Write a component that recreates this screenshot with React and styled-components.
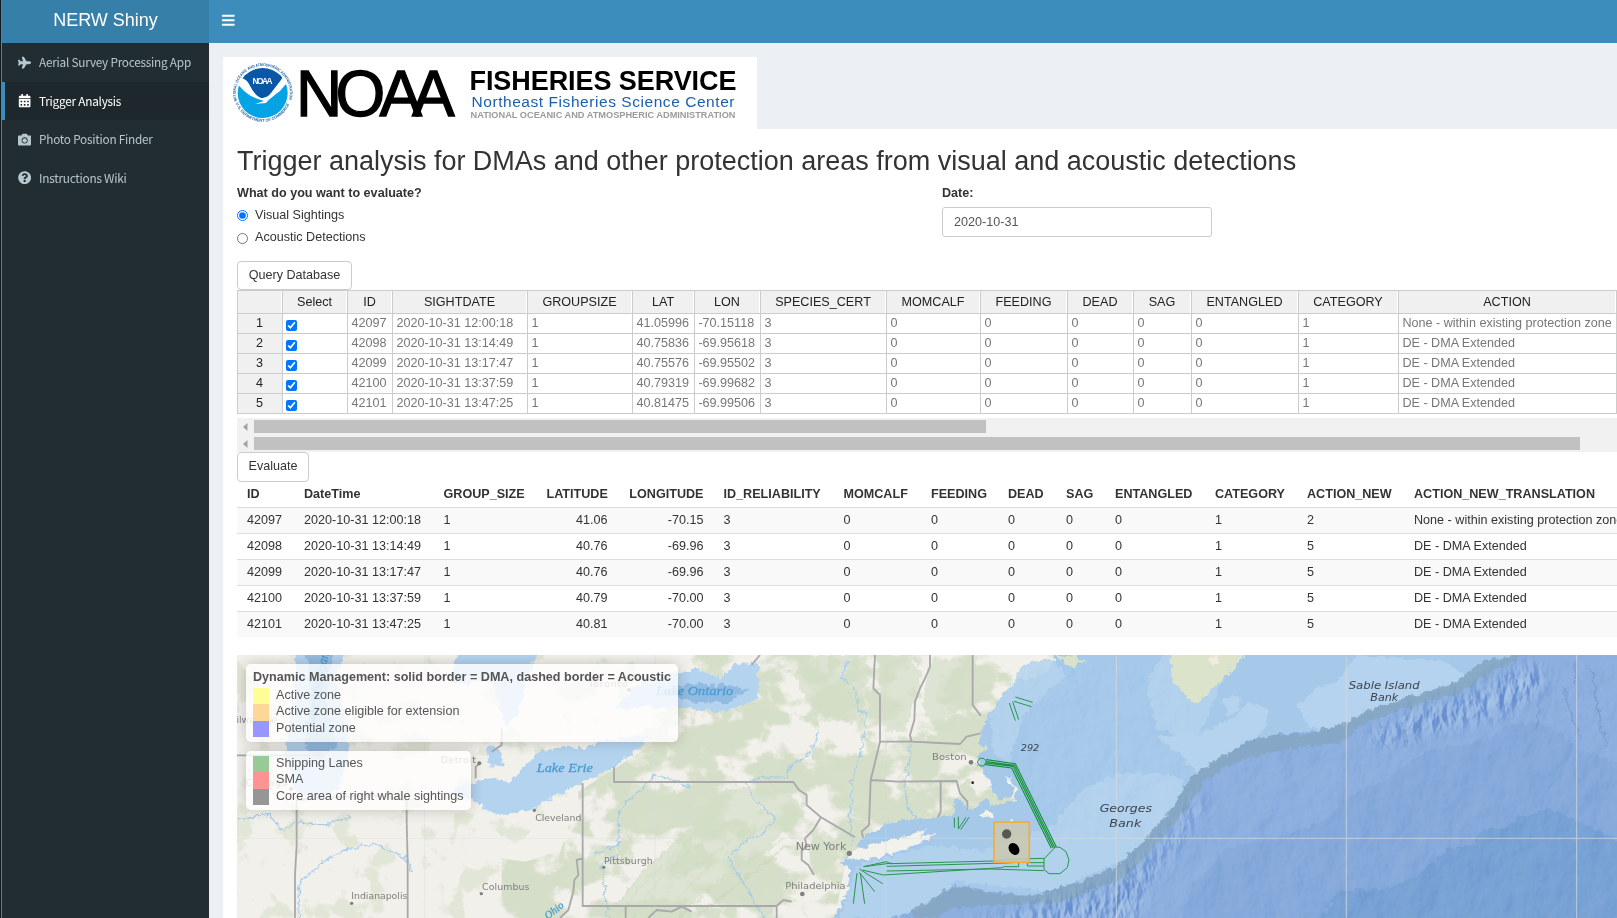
import React from "react";
import styled, { createGlobalStyle, css } from "styled-components";
import { FaPlane, FaCalendarAlt, FaCamera, FaQuestionCircle, FaBars } from "react-icons/fa";

const GlobalStyle = createGlobalStyle`
  * { box-sizing: border-box; }
  html, body { margin: 0; padding: 0; overflow: hidden; background: #fff; }
  body {
    font-family: "Liberation Sans", Arial, sans-serif;
    font-size: 12.6px;
    line-height: 18px;
    color: #333;
  }
`;

const Page = styled.div`
  display: flex;
  width: 1617px;
  height: 918px;
  overflow: hidden;
  background: #ecf0f5;
`;

const Sidebar = styled.aside`
  flex: 0 0 209px;
  background: #222d32;
  border-left: 1px solid #111b1e;
  box-shadow: inset 1px 0 0 #2b9a94;
  padding-left: 1px;
`;

const Brand = styled.div`
  height: 43px;
  padding-top: 7px;
  background: #367fa9;
  color: #fff;
  font-size: 18px;
  line-height: 26px;
  text-align: center;
`;

const NavItem = styled.a`
  display: flex;
  align-items: center;
  height: 38.6px;
  padding-left: 13px;
  border-left: 3px solid transparent;
  font-family: "Noto Sans CJK SC", "Open Sans", sans-serif;
  font-size: 11.8px;
  letter-spacing: -0.24px;
  white-space: nowrap;
  color: #b8c7ce;
  ${(p) =>
    p.$active &&
    css`
      color: #fff;
      background: #1e282c;
      border-left-color: #3c8dbc;
    `}
`;

const NavIcon = styled.span`
  display: flex;
  width: 21px;
  font-size: 13.3px;
`;

const Main = styled.main`
  flex: 1;
  min-width: 0;
`;

const TopBar = styled.header`
  display: flex;
  align-items: flex-start;
  height: 43px;
  padding: 13px 0 0 12px;
  background: #3c8dbc;
  color: #fff;
  font-size: 14.5px;
`;

const Content = styled.section`
  padding: 14px 0 0 14px;
`;

const LogoPanel = styled.div`
  width: 534px;
  height: 72px;
  background: #fff;
  svg { display: block; }
`;

const Panel = styled.div`
  height: 789px;
  padding-left: 14px;
  background: #fff;
  overflow: hidden;
`;

const Title = styled.h2`
  margin: 0;
  padding-top: 17px;
  height: 55px;
  font-size: 27px;
  line-height: 30px;
  font-weight: 400;
  letter-spacing: -0.01px;
  white-space: nowrap;
`;

const FormRow = styled.div`
  display: flex;
  height: 77px;
`;

const FormColumn = styled.div`
  width: ${(p) => p.$width}px;
`;

const FieldLabel = styled.div`
  font-weight: 700;
`;

const RadioOption = styled.label`
  display: flex;
  height: 22px;
  padding-top: 4px;
  gap: 7px;
  input {
    width: 11px;
    height: 11px;
    margin: ${(p) => p.$drop}px 0 0;
    accent-color: #0075ff;
  }
`;

const DateInput = styled.div`
  margin-top: 5px;
  width: 270px;
  height: 30px;
  padding: 5px 11px;
  border: 1px solid #ccc;
  border-radius: 3px;
  color: #555;
`;

const Button = styled.button`
  display: block;
  width: ${(p) => p.$width}px;
  height: ${(p) => p.$height}px;
  padding: 0 0 2px;
  border: 1px solid #ccc;
  border-radius: 4px;
  background: #fff;
  color: #333;
  font: inherit;
`;

const SightingGrid = styled.div`
  display: grid;
  grid-template-columns: 45px 65px 45px 135px 105px 62px 66px 126px 94px 87px 66px 58px 107px 100px 218px;
  grid-template-rows: 23px repeat(5, 20px);
  border: solid #ccc;
  border-width: 1px 0 0 1px;
`;

const HeadCell = styled.div`
  padding: 2px 1px 0 0;
  border: solid #ccc;
  border-width: 0 1px 1px 0;
  box-shadow: inset -1px 0 0 #fff;
  background: #f0f0f0;
  color: #222;
  text-align: center;
`;

const RowHead = styled(HeadCell)`
  padding-top: 0;
  box-shadow: none;
`;

const GridCell = styled.div`
  padding-left: 3.4px;
  border: solid #ccc;
  border-width: 0 1px 1px 0;
  color: #777;
  white-space: nowrap;
`;

const Check = styled.input`
  display: block;
  width: 11px;
  height: 11px;
  margin: 6px 0 0 0;
  accent-color: #0075ff;
`;

const ScrollTrack = styled.div`
  display: flex;
  height: 17px;
  margin-top: ${(p) => p.$gap || 0}px;
  padding: 2px 0;
  background: #f1f1f1;
`;

const ScrollArrow = styled.div`
  width: 17px;
  padding: 3px 0 0 6px;
  svg { display: block; }
`;

const ScrollThumb = styled.div`
  width: ${(p) => p.$width}px;
  height: 13px;
  background: #c1c1c1;
`;

const ResultTable = styled.div`
  height: 173px;
  padding-bottom: 18px;
`;

const ResultRow = styled.div`
  display: grid;
  grid-template-columns: 57px 139.5px 103px 81px 96px 120px 87.5px 77px 58px 49px 100px 92px 107px 260px;
  height: 26px;
  padding-top: 3px;
  border-top: 1px solid #ddd;
  background: ${(p) => (p.$striped ? "#f9f9f9" : "#fff")};
  ${(p) =>
    p.$head &&
    css`
      height: 25px;
      border-top: 0;
      font-weight: 700;
    `}
`;

const ResultCell = styled.div`
  padding: 0 10px;
  text-align: ${(p) => (p.$right ? "right" : "left")};
  white-space: nowrap;
`;

const MapFrame = styled.div`
  position: relative;
  height: 263px;
  overflow: hidden;
  > svg { display: block; }
`;

const Legends = styled.div`
  position: absolute;
  left: 9px;
  top: 9px;
  display: flex;
  flex-direction: column;
  align-items: flex-start;
  gap: 9px;
`;

const Legend = styled.div`
  width: ${(p) => p.$width}px;
  height: ${(p) => p.$height}px;
  padding: 5px 7px;
  border-radius: 5px;
  background: rgba(255, 255, 255, 0.8);
  box-shadow: 0 0 14px rgba(0, 0, 0, 0.2);
  color: #555;
  white-space: nowrap;
`;

const LegendTitle = styled.div`
  height: 19px;
  line-height: 16px;
  font-weight: 700;
`;

const LegendItem = styled.div`
  display: flex;
  gap: 7px;
  height: 16.3px;
  line-height: 15.4px;
`;

const Swatch = styled.span`
  width: 16px;
  background: ${(p) => p.$color};
`;

const navItems = [
  { icon: FaPlane, label: "Aerial Survey Processing App" },
  { icon: FaCalendarAlt, label: "Trigger Analysis", active: true },
  { icon: FaCamera, label: "Photo Position Finder" },
  { icon: FaQuestionCircle, label: "Instructions Wiki" },
];

const gridHeads = ["", "Select", "ID", "SIGHTDATE", "GROUPSIZE", "LAT", "LON", "SPECIES_CERT", "MOMCALF", "FEEDING", "DEAD", "SAG", "ENTANGLED", "CATEGORY", "ACTION"];
const resultHeads = ["ID", "DateTime", "GROUP_SIZE", "LATITUDE", "LONGITUDE", "ID_RELIABILITY", "MOMCALF", "FEEDING", "DEAD", "SAG", "ENTANGLED", "CATEGORY", "ACTION_NEW", "ACTION_NEW_TRANSLATION"];

const sightings = [
  ["42097", "2020-10-31 12:00:18", "41.05996", "-70.15118", "41.06", "-70.15", "2", "None - within existing protection zone"],
  ["42098", "2020-10-31 13:14:49", "40.75836", "-69.95618", "40.76", "-69.96", "5", "DE - DMA Extended"],
  ["42099", "2020-10-31 13:17:47", "40.75576", "-69.95502", "40.76", "-69.96", "5", "DE - DMA Extended"],
  ["42100", "2020-10-31 13:37:59", "40.79319", "-69.99682", "40.79", "-70.00", "5", "DE - DMA Extended"],
  ["42101", "2020-10-31 13:47:25", "40.81475", "-69.99506", "40.81", "-70.00", "5", "DE - DMA Extended"],
];

function NoaaLogo() {
  return (
    <svg width="534" height="72" viewBox="223 57 534 72">
      <defs>
        <clipPath id="seal"><circle cx="262.7" cy="93" r="25" /></clipPath>
        <path id="ringTop" d="M236.9 101 A27 27 0 1 1 288.5 101" />
        <path id="ringBottom" d="M234.9 100.5 A28.8 28.8 0 0 0 290.5 100.5" />
      </defs>
      <g clipPath="url(#seal)">
        <rect x="233" y="63" width="60" height="60" fill="#fff" />
        <path d="M243 65H283V77C280 82 276 86 272.500 91C269 96 266 98 261 98C256 96 252 90 249 84C247 80 244 79 240 77Z" fill="#0a57a7" />
        <path d="M237 83C243 91 249 96 258 99L264 101L255 104L266 103C270 98 275 95 280 91L290 79V124H236Z" fill="#04a3e6" />
      </g>
      <text x="262.600" y="84" textAnchor="middle" fontFamily="Liberation Sans" fontWeight="700" fontSize="8.300" fill="#fff" textLength="20">NOAA</text>
      <g fontFamily="Liberation Sans" fontWeight="700" fontSize="4" fill="#2467ae">
        <text><textPath href="#ringTop" textLength="99" lengthAdjust="spacingAndGlyphs">NATIONAL OCEANIC AND ATMOSPHERIC ADMINISTRATION</textPath></text>
        <text><textPath href="#ringBottom" startOffset="3" textLength="68" lengthAdjust="spacingAndGlyphs">U.S. DEPARTMENT OF COMMERCE</textPath></text>
      </g>
      <text x="296 335.500 379.500 412" y="115.500" fontFamily="Liberation Sans" fontSize="64" fill="#000" stroke="#000" strokeWidth="1.300">NOAA</text>
      <text x="469.500" y="90" fontFamily="Liberation Sans" fontWeight="700" fontSize="27" fill="#000" textLength="267">FISHERIES SERVICE</text>
      <text x="471.500" y="106.500" fontFamily="Liberation Sans" fontSize="15.500" fill="#1a5fae" textLength="263">Northeast Fisheries Science Center</text>
      <text x="470.500" y="118" fontFamily="Liberation Sans" fontWeight="700" fontSize="9" fill="#9b9b9b" textLength="265" lengthAdjust="spacingAndGlyphs">NATIONAL OCEANIC AND ATMOSPHERIC ADMINISTRATION</text>
    </svg>
  );
}

/* Drawn in thirds of a pixel: west, central and east sheets are shifted side by side. */
function CoastMap() {
  const sea = "#a6c9ea";
  const shallow = "#b5d3ee";
  return (
    <svg width="1380" height="263" viewBox="36 30 4140 789">
      <defs>
        <filter id="forest" x="0" y="0" width="100%" height="100%" colorInterpolationFilters="sRGB">
          <feTurbulence type="fractalNoise" baseFrequency=".006 .009" numOctaves="6" seed="8" />
          <feColorMatrix values="0 0 0 0 .835  0 0 0 0 .87  0 0 0 0 .785  9 0 0 0 -3.9" />
          <feComposite in2="SourceGraphic" operator="in" />
        </filter>
        <filter id="forestLight" x="0" y="0" width="100%" height="100%" colorInterpolationFilters="sRGB">
          <feTurbulence type="fractalNoise" baseFrequency=".012" numOctaves="6" seed="3" />
          <feColorMatrix values="0 0 0 0 .84  0 0 0 0 .875  0 0 0 0 .79  10 0 0 0 -5.7" />
          <feComposite in2="SourceGraphic" operator="in" />
        </filter>
        <filter id="rough" x="-5%" y="-5%" width="110%" height="110%" colorInterpolationFilters="sRGB">
          <feTurbulence type="fractalNoise" baseFrequency=".05" numOctaves="3" seed="5" />
          <feDisplacementMap in="SourceGraphic" scale="26" xChannelSelector="R" yChannelSelector="G" />
        </filter>
        <filter id="relief" x="0" y="0" width="100%" height="100%" colorInterpolationFilters="sRGB">
          <feTurbulence type="fractalNoise" baseFrequency=".012 .009" numOctaves="4" seed="12" />
          <feColorMatrix values="0 0 0 0 0  0 0 0 0 0  0 0 0 0 0  1 0 0 0 0" result="h" />
          <feDiffuseLighting in="h" surfaceScale="12" lightingColor="#fff" result="l"><feDistantLight azimuth="215" elevation="32" /></feDiffuseLighting>
          <feComposite in="l" in2="SourceGraphic" operator="in" />
        </filter>
        <filter id="canyons" x="-5%" y="-5%" width="110%" height="110%" colorInterpolationFilters="sRGB">
          <feTurbulence type="fractalNoise" baseFrequency=".035 .016" numOctaves="3" seed="7" />
          <feColorMatrix values="0 0 0 0 0  0 0 0 0 0  0 0 0 0 0  1 0 0 0 0" result="h" />
          <feDiffuseLighting in="h" surfaceScale="18" lightingColor="#fff" result="l"><feDistantLight azimuth="200" elevation="32" /></feDiffuseLighting>
          <feGaussianBlur in="SourceAlpha" stdDeviation="22" result="soft" />
          <feComposite in="l" in2="soft" operator="in" />
        </filter>
      </defs>

      <rect x="36" y="30" width="4140" height="789" fill="#f2f0eb" />
      <g filter="url(#forestLight)"><path d="M36 30H1395V500L1070 420L830 640V819H36Z" opacity=".6" /></g>
      <g filter="url(#forest)">
        <path d="M1395 30H2490V400L2200 560L1860 660L1830 819H830V640L900 650L1060 600L1060 440L1280 300Z" />
      </g>
      <g filter="url(#forestLight)"><path d="M1395 30H2490V400L2200 560L1860 660L1830 819H1000V640L1060 440L1280 330Z" /></g>
      <g stroke="#c4d4b2" strokeWidth="6" opacity=".42" fill="none" filter="url(#rough)">
        <path d="M1180 819L1240 730L1400 580M1220 819L1320 680L1500 540M1265 819L1360 700L1560 560M1300 819L1450 670L1620 540M1360 819L1500 690L1680 580M1160 800L1270 660L1330 620M1420 810L1560 700L1690 600" />
      </g>
      <g fill="#d3dec7" opacity=".65" filter="url(#rough)">
        <path d="M1740 30H1930V140L1880 240L1800 220L1740 160L1710 90ZM1960 60L2060 40L2090 90L2040 260H1980ZM2120 40H2230L2200 190L2130 250L2090 180ZM1150 810L1280 650L1400 540L1500 430L1680 430L1740 500L1620 620L1440 740L1350 819Z" />
      </g>

      <g filter="url(#rough)">
        <path d="M215 10H360L330 100L370 260L373 340L340 430L280 465L210 440L180 320L200 220Z" fill="#b4d3ef" />
        <path d="M240 10H330L300 150L335 300L280 340L240 310L260 180Z" fill="#96bce2" />
        <path d="M700 10H940L900 120L880 210L840 245L800 100L710 120L680 110Z" fill="#b4d3ef" />
        <path d="M785 310L800 300L830 315L840 360L800 365Z" fill="#b4d3ef" />
        <path d="M735 415L800 400L850 410L880 385L940 325L1000 305L1080 310L1130 285L1270 270L1265 290L1180 355L1070 415L980 460L930 490L830 512L780 495L740 460L680 450L700 425Z" fill="#b4d3ef" />
        <path d="M1165 195L1230 125L1330 85L1420 75L1480 100L1530 60L1600 55V160L1570 175L1480 203L1400 190L1260 185Z" fill="#b4d3ef" />
        <path d="M1300 140L1400 115L1500 120L1570 135L1500 175L1410 170Z" fill="#91bbe1" />
      </g>

      <g fill="none" stroke="#a7cdec" strokeWidth="4" filter="url(#rough)">
        <path d="M36 525L130 510L180 560L210 530L300 540L375 520L360 505M220 819L225 710L310 640L370 610L450 597L545 640L560 680M1185 620L1130 660L1148 819M1100 630L1180 600L1180 500L1240 440L1290 390L1330 400L1400 430M1565 410L1630 395L1680 400L1700 360L1750 330L1780 260M1565 410L1580 450L1650 520L1620 560L1560 590L1510 640L1570 740L1620 819M1865 50L1850 100L1890 130L1900 200L1925 200L1910 320L1885 380L1875 520L1880 600M2060 290L2040 420L2045 480L2080 530" />
      </g>

      <g fill="none" stroke="#a9a9ab" strokeWidth="5.500" strokeLinejoin="round">
        <path d="M36 331H300M215 465V600L210 690V819M215 465L440 450L545 465M545 465V530L548 650V819M765 355L752 365V400M830 250V300L800 320M1073 415V783H1655M1167 365V411H1705L1722 435L1745 450V480L1788 517L1890 577M1788 517L1765 555L1740 580L1745 605L1730 618V645L1750 660L1767 690M1073 640L1055 645L1060 690L1048 705L1045 740L1030 795L1005 819M1202 783V819M1655 783V819M1655 783L1675 765L1700 770M1270 819L1295 795L1340 800L1370 785L1400 800M1605 30L1580 60M1950 30L1945 130L1965 150V290L1937 405L1932 540L1910 560L1915 580M2115 30V65L2105 90L2085 130L2070 170L2068 225L2055 270L2060 290M1965 290L2060 290L2205 297L2225 275L2267 265M2243 30V180L2267 212M1937 405L2020 410L2195 408L2205 445L2227 470V498M2147 410V500L2135 525" />
      </g>

      <g transform="translate(1395 0)">
        <path filter="url(#rough)" d="M1110 0L1080 70L1040 95L985 105L950 130L930 165L905 195L890 225L875 260L870 295L890 310L860 335L868 350L855 362L875 370L890 400L908 425L907 450L935 462L967 456L968 425L945 400L965 400L980 450L970 468L900 482L885 455L870 480L845 490L830 500L815 465L800 460L790 505L740 520L640 525L590 535L550 560L515 585L498 615L450 655L485 675L470 740L450 785L410 840H2850V0Z" fill={sea} />
        <path d="M1000 60L1080 40L1130 90L1060 150L1000 210L960 350L910 330L900 210ZM1410 30L1370 120L1400 250L1520 290L1600 100L1640 0ZM1090 540L1180 430L1290 385L1410 385L1475 400L1480 490L1400 600L1200 690L1080 740L800 710L650 819H450L500 660L730 600L880 620Z" fill={shallow} opacity=".85" filter="url(#rough)" />
        <path filter="url(#rough)" d="M497 612L540 597L620 585L680 563L712 552L690 574L740 568L700 590L640 615L570 635L500 647L475 640ZM870 515L890 495L912 515ZM945 535L970 525L975 535Z" fill="#f2f1eb" />
        <path filter="url(#rough)" d="M1100 30L1160 35L1190 50L1140 65Z" fill="#d8e2ca" />
        <path d="M980 60H1500V560L1100 600L1010 480L900 300Z" fill="#000" filter="url(#relief)" opacity=".14" style={{ mixBlendMode: "soft-light" }} />
      </g>

      <g transform="translate(2775 0)">
        <g filter="url(#rough)">
          <path d="M60 0L65 110L90 130L125 175L150 165L200 120L240 80L290 25V0Z" fill="#dbe3ca" />
          <path d="M175 40L200 30L210 50L190 60Z" fill="#f0ebe0" />
          <path d="M20 275L150 265L250 220L300 170L350 190L355 240L320 280L230 330L140 385L100 335ZM440 180L500 130L560 110L620 30L890 50L940 90L920 130L800 150L650 200L590 245L480 250ZM220 160L265 155V200L230 210Z" fill={shallow} />
        </g>
        <path filter="url(#rough)" d="M-770 819L-690 795L-590 720L-480 740L-350 750L-190 705L-100 665L-30 600L40 530L90 460L120 400L190 355L300 285L370 270L500 260L590 240L650 200L800 150L920 125L1010 70L1120 10H1450V850H-770Z" fill="#8cafdf" />
        <path filter="url(#rough)" d="M-640 819L-590 790L-440 780L-260 770L-80 700L10 610L60 550L120 480L155 420L200 380L300 335L450 305L580 290L660 225L810 180L930 140L1020 88L1120 30L1000 46L915 112L790 150L650 196L590 236L510 250L490 270L370 270L300 286L190 350L120 398L85 458L36 528L-34 598L-100 662L-190 702L-350 752L-480 745L-590 722L-640 750L-720 800L-700 819Z" fill="#86a8c4" opacity=".9" />
        <path filter="url(#rough)" d="M80 850L130 720L230 610L430 560L520 530L600 450L730 390L830 315L1000 290L1080 235L1200 240L1280 310L1450 370V850Z" fill="#85a9da" />
        <path filter="url(#rough)" d="M500 850L560 740L720 730L800 690L890 615L970 600L985 555L1060 550L1100 520L1200 490L1290 530L1450 610V850Z" fill="#78a2d4" />
        <path d="M-500 840L-350 780L-100 710L60 560L130 430L300 330L590 290L800 195L1120 50H1401V819Z" fill="#000" filter="url(#relief)" opacity=".17" style={{ mixBlendMode: "soft-light" }} />
        <path d="M-600 850L-400 800L-100 720L60 580L150 440L160 480L90 600L0 700L-40 830ZM640 275L800 195L930 160L1110 65L1170 60L1190 130L1060 210L850 260L700 300Z" fill="#000" filter="url(#canyons)" opacity=".62" style={{ mixBlendMode: "soft-light" }} />
        <path d="M1240 130L1285 270M1325 70L1345 210L1370 310M1165 180L1160 250M690 230L710 310M755 230L770 310M790 250L805 300M1280 50L1270 110M-70 660L-60 730M-170 700L-165 745" stroke="#6c8fc2" strokeWidth="6" opacity=".45" fill="none" filter="url(#rough)" />
      </g>

      <g stroke="#d5dadf" strokeWidth="3" opacity=".75">
        <path d="M36 580H2230M599 30V819M1290 30V819M1982 30V819" opacity=".5" />
        <path d="M2230 580H4176M2674 30V819M3364 30V819M4055 30V819" />
      </g>

      <g fill="#7f7f7f" fontFamily="DejaVu Sans" fontSize="28">
        <g>
          <circle cx="928" cy="496" r="5" /><circle cx="1136" cy="667" r="5" /><circle cx="769" cy="746" r="5" /><circle cx="380" cy="775" r="5" />
          <circle cx="763" cy="355" r="6" /><circle cx="1212" cy="134" r="6" /><circle cx="198" cy="432" r="6" />
          <circle cx="2238" cy="352" r="7" /><circle cx="1873" cy="625" r="8" /><circle cx="1732" cy="747" r="7" />
        </g>
        <text x="931" y="528" textLength="138">Cleveland</text>
        <text x="1137" y="656" textLength="146">Pittsburgh</text>
        <text x="771" y="734" textLength="142">Columbus</text>
        <text x="379" y="763" textLength="168">Indianapolis</text>
        <text x="647" y="353" textLength="106">Detroit</text>
        <text x="1090" y="126" textLength="118">Toronto</text>
        <text x="62" y="424" textLength="126">Chicago</text>
        <text x="10" y="234" textLength="147">Milwaukee</text>
        <text x="2121" y="344" textLength="104" lengthAdjust="spacingAndGlyphs">Boston</text>
        <text x="1712" y="614" fontSize="31" textLength="152" lengthAdjust="spacingAndGlyphs">New York</text>
        <text x="1681" y="733" textLength="181" lengthAdjust="spacingAndGlyphs">Philadelphia</text>
      </g>
      <g fill="#469dd2" fontFamily="Liberation Serif" fontStyle="italic" fontSize="40" stroke="#469dd2" strokeWidth=".8">
        <text x="935" y="381" textLength="169" lengthAdjust="spacingAndGlyphs">Lake Erie</text>
        <text x="1293" y="149" textLength="232" lengthAdjust="spacingAndGlyphs">Lake Ontario</text>
        <text transform="translate(265 245) rotate(-78)" textLength="225" lengthAdjust="spacingAndGlyphs">Lake Michigan</text>
        <text transform="translate(968 824) rotate(-38)" fontSize="32">Ohio</text>
      </g>
      <g fill="#3c454d" fontFamily="DejaVu Sans" fontStyle="italic" fontSize="34">
        <text x="2387" y="318" fontSize="28" textLength="56" lengthAdjust="spacingAndGlyphs">292</text>
        <text x="2624" y="500" textLength="157" lengthAdjust="spacingAndGlyphs">Georges</text>
        <text x="2653" y="546" textLength="96" lengthAdjust="spacingAndGlyphs">Bank</text>
        <text x="3371" y="131" fontSize="32" textLength="213" lengthAdjust="spacingAndGlyphs">Sable Island</text>
        <text x="3436" y="167" fontSize="32" textLength="84" lengthAdjust="spacingAndGlyphs">Bank</text>
      </g>

      <g fill="none" stroke="#28964a" strokeWidth="3" transform="translate(1395 0)">
        <path d="M976 156L1028 172M972 169L1024 185M968 170L986 224M958 174L976 227M793 518V548M805 515V552L828 517M812 554L837 517" />
        <path d="M862 351L870 339L882 341L889 350L881 363L869 362ZM1096 606L1062 642V673L1077 686H1110L1132 668L1137 645L1128 620L1110 607Z" />
        <path d="M888 344L976 356L1099 606M888 350L973 361L1094 608M886 354L969 364L1089 608M886 359L965 369L1084 610" stroke="#15913a" strokeWidth="3.500" />
        <path d="M520 665L590 650L600 656L910 648L945 643L1062 640M590 664L945 654L985 652M943 665H986V653M1012 653V663H1062M1012 653H1062M517 675L580 690L935 668L943 665M590 678L900 672L1062 677M522 665L605 654M508 672L578 716M508 682L554 740M501 684L490 776M511 684L524 776" />
      </g>
      <rect x="2307" y="531" width="106" height="121" fill="#c9c8b2" fillOpacity=".88" stroke="#f6ab35" strokeWidth="5" />
      <circle cx="2345" cy="567" r="14" fill="#575850" />
      <ellipse cx="2367" cy="612" rx="15" ry="19" transform="rotate(-35 2367 612)" fill="#000" />
      <circle cx="2243" cy="413" r="4" fill="#30152c" />
    </svg>
  );
}

function ArrowLeft() {
  return (
    <ScrollArrow>
      <svg width="5" height="8" viewBox="0 0 5 8"><path d="M4.500 0V8L0 4Z" fill="#a3a3a3" /></svg>
    </ScrollArrow>
  );
}

export default function App() {
  return (
    <>
      <GlobalStyle />
      <Page>
        <Sidebar>
          <Brand>NERW Shiny</Brand>
          {navItems.map(({ icon: Icon, label, active }) => (
            <NavItem key={label} $active={active}>
              <NavIcon><Icon /></NavIcon>
              {label}
            </NavItem>
          ))}
        </Sidebar>
        <Main>
          <TopBar><FaBars /></TopBar>
          <Content>
            <LogoPanel><NoaaLogo /></LogoPanel>
            <Panel>
              <Title>Trigger analysis for DMAs and other protection areas from visual and acoustic detections</Title>
              <FormRow>
                <FormColumn $width={705}>
                  <FieldLabel>What do you want to evaluate?</FieldLabel>
                  <RadioOption $drop={4}><input type="radio" name="source" defaultChecked />Visual Sightings</RadioOption>
                  <RadioOption $drop={5}><input type="radio" name="source" />Acoustic Detections</RadioOption>
                </FormColumn>
                <FormColumn $width={270}>
                  <FieldLabel>Date:</FieldLabel>
                  <DateInput>2020-10-31</DateInput>
                </FormColumn>
              </FormRow>
              <Button $width={115} $height={29}>Query Database</Button>
              <SightingGrid>
                {gridHeads.map((h, i) => <HeadCell key={i}>{h}</HeadCell>)}
                {sightings.map(([id, date, lat, lon, , , , action], i) => (
                  <React.Fragment key={id}>
                    <RowHead>{i + 1}</RowHead>
                    <GridCell><Check type="checkbox" defaultChecked /></GridCell>
                    {[id, date, "1", lat, lon, "3", "0", "0", "0", "0", "0", "1", action].map((v, j) => (
                      <GridCell key={j}>{v}</GridCell>
                    ))}
                  </React.Fragment>
                ))}
              </SightingGrid>
              <ScrollTrack $gap={4}><ArrowLeft /><ScrollThumb $width={732} /></ScrollTrack>
              <ScrollTrack><ArrowLeft /><ScrollThumb $width={1326} /></ScrollTrack>
              <Button $width={72} $height={30}>Evaluate</Button>
              <ResultTable>
                <ResultRow $head>
                  {resultHeads.map((h, i) => <ResultCell key={h} $right={i === 3 || i === 4}>{h}</ResultCell>)}
                </ResultRow>
                {sightings.map(([id, date, , , lat, lon, code, action], i) => (
                  <ResultRow key={id} $striped={i % 2 === 0}>
                    {[id, date, "1", lat, lon, "3", "0", "0", "0", "0", "0", "1", code, action].map((v, j) => (
                      <ResultCell key={j} $right={j === 3 || j === 4}>{v}</ResultCell>
                    ))}
                  </ResultRow>
                ))}
              </ResultTable>
              <MapFrame>
                <CoastMap />
                <Legends>
                  <Legend $width={432} $height={78}>
                    <LegendTitle>Dynamic Management: solid border = DMA, dashed border = Acoustic</LegendTitle>
                    <LegendItem><Swatch $color="#fffe96" />Active zone</LegendItem>
                    <LegendItem><Swatch $color="#fdd795" />Active zone eligible for extension</LegendItem>
                    <LegendItem><Swatch $color="#9797fe" />Potential zone</LegendItem>
                  </Legend>
                  <Legend $width={225} $height={59}>
                    <LegendItem><Swatch $color="#97ca97" />Shipping Lanes</LegendItem>
                    <LegendItem><Swatch $color="#fe9393" />SMA</LegendItem>
                    <LegendItem><Swatch $color="#969696" />Core area of right whale sightings</LegendItem>
                  </Legend>
                </Legends>
              </MapFrame>
            </Panel>
          </Content>
        </Main>
      </Page>
    </>
  );
}
